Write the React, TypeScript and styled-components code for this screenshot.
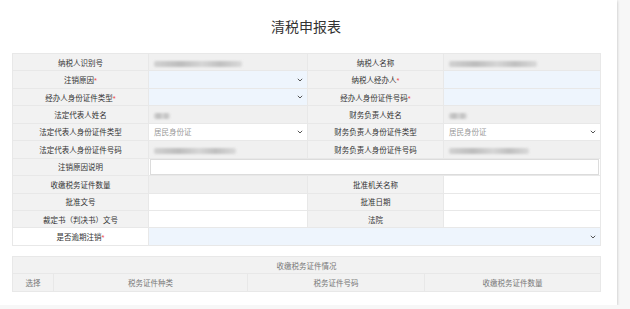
import styled, { createGlobalStyle } from "styled-components";

const GlobalStyle = createGlobalStyle`
    html, body {
        margin: 0;
        padding: 0;
        background: #f7f7f7;
        font-family: "Noto Sans CJK SC", "Noto Sans", sans-serif;
    }
`;

const Card = styled.div`
    width: 617px;
    height: 305px;
    box-sizing: border-box;
    padding: 0 17px 0 12px;
    background: #ffffff;
    box-shadow: 0 1px 3px rgba(0, 0, 0, 0.25);
`;

const Title = styled.h1`
    margin: 0;
    height: 53px;
    line-height: 53px;
    text-align: center;
    font-size: 14px;
    font-weight: 400;
    color: #333;
`;

const Table = styled.table`
    width: 588px;
    border-collapse: collapse;
    table-layout: fixed;
    font-size: 7.5px;
`;

const Row = styled.tr`
    height: 17.45px;
`;

const Label = styled.td<{ $white?: boolean }>`
    padding: 0;
    border: 1px solid #e8e8e8;
    background: ${(p) => (p.$white ? "#ffffff" : "#f2f2f2")};
    color: #333;
    text-align: center;
    white-space: nowrap;
`;

const Value = styled.td<{ $tone?: "gray" | "blue" | "white" }>`
    position: relative;
    padding: 0 5px;
    border: 1px solid #e8e8e8;
    background: ${(p) =>
        p.$tone === "blue" ? "#eef5fd" : p.$tone === "gray" ? "#f0f0f0" : "#ffffff"};
    color: #999;
    white-space: nowrap;
    overflow: hidden;
`;

const Star = styled.span`
    color: #f04848;
    font-family: "Liberation Sans", sans-serif;
    margin-left: 0;
`;

const Blur = styled.span<{ $w: number }>`
    display: inline-block;
    width: ${(p) => p.$w}px;
    height: 6px;
    vertical-align: middle;
    background: linear-gradient(90deg, #d2d2d2, #bdbdbd 30%, #d6d6d6 55%, #c0c0c0 75%, #dadada);
    filter: blur(1.2px);
    border-radius: 2px;
`;

const Arrow = styled.svg`
    position: absolute;
    right: 4px;
    top: 50%;
    margin-top: -2px;
`;

const InputBox = styled.div`
    height: 14px;
    margin: 0 -4px;
    border: 1px solid #dcdcdc;
    background: #fff;
`;

const SubTable = styled(Table)`
    margin-top: 10px;
`;

const HeadCell = styled.td`
    padding: 0;
    border: 1px solid #e8e8e8;
    background: #f2f2f2;
    color: #777;
    text-align: center;
    white-space: nowrap;
`;

function Chevron() {
    return (
        <Arrow width="6" height="4" viewBox="0 0 6 4">
            <path d="M0.8 0.8 L3 3 L5.2 0.8" fill="none" stroke="#555" strokeWidth="1" />
        </Arrow>
    );
}

function Req({ children }: { children: string }) {
    return (
        <>
            {children}
            <Star>*</Star>
        </>
    );
}

export default function App() {
    return (
        <>
            <GlobalStyle />
            <Card>
                <Title>清税申报表</Title>
                <Table>
                    <colgroup>
                        <col style={{ width: 136 }} />
                        <col style={{ width: 159 }} />
                        <col style={{ width: 136 }} />
                        <col style={{ width: 157 }} />
                    </colgroup>
                    <tbody>
                        <Row>
                            <Label>纳税人识别号</Label>
                            <Value $tone="gray"><Blur $w={88} /></Value>
                            <Label>纳税人名称</Label>
                            <Value $tone="gray"><Blur $w={88} /></Value>
                        </Row>
                        <Row>
                            <Label><Req>注销原因</Req></Label>
                            <Value $tone="blue"><Chevron /></Value>
                            <Label><Req>纳税人经办人</Req></Label>
                            <Value $tone="blue" />
                        </Row>
                        <Row>
                            <Label><Req>经办人身份证件类型</Req></Label>
                            <Value $tone="blue"><Chevron /></Value>
                            <Label><Req>经办人身份证件号码</Req></Label>
                            <Value $tone="blue" />
                        </Row>
                        <Row>
                            <Label>法定代表人姓名</Label>
                            <Value $tone="gray"><Blur $w={16} /></Value>
                            <Label>财务负责人姓名</Label>
                            <Value $tone="gray"><Blur $w={18} /></Value>
                        </Row>
                        <Row>
                            <Label>法定代表人身份证件类型</Label>
                            <Value>居民身份证<Chevron /></Value>
                            <Label>财务负责人身份证件类型</Label>
                            <Value>居民身份证<Chevron /></Value>
                        </Row>
                        <Row>
                            <Label>法定代表人身份证件号码</Label>
                            <Value $tone="gray"><Blur $w={82} /></Value>
                            <Label>财务负责人身份证件号码</Label>
                            <Value $tone="gray"><Blur $w={80} /></Value>
                        </Row>
                        <Row>
                            <Label>注销原因说明</Label>
                            <Value colSpan={3}><InputBox /></Value>
                        </Row>
                        <Row>
                            <Label>收缴税务证件数量</Label>
                            <Value $tone="gray" />
                            <Label>批准机关名称</Label>
                            <Value />
                        </Row>
                        <Row>
                            <Label>批准文号</Label>
                            <Value />
                            <Label>批准日期</Label>
                            <Value />
                        </Row>
                        <Row>
                            <Label>裁定书（判决书）文号</Label>
                            <Value />
                            <Label>法院</Label>
                            <Value />
                        </Row>
                        <Row>
                            <Label $white><Req>是否逾期注销</Req></Label>
                            <Value $tone="blue" colSpan={3}><Chevron /></Value>
                        </Row>
                    </tbody>
                </Table>
                <SubTable>
                    <colgroup>
                        <col style={{ width: 41 }} />
                        <col style={{ width: 194 }} />
                        <col style={{ width: 177 }} />
                        <col style={{ width: 176 }} />
                    </colgroup>
                    <tbody>
                        <Row>
                            <HeadCell colSpan={4}>收缴税务证件情况</HeadCell>
                        </Row>
                        <Row>
                            <HeadCell>选择</HeadCell>
                            <HeadCell>税务证件种类</HeadCell>
                            <HeadCell>税务证件号码</HeadCell>
                            <HeadCell>收缴税务证件数量</HeadCell>
                        </Row>
                    </tbody>
                </SubTable>
            </Card>
        </>
    );
}
